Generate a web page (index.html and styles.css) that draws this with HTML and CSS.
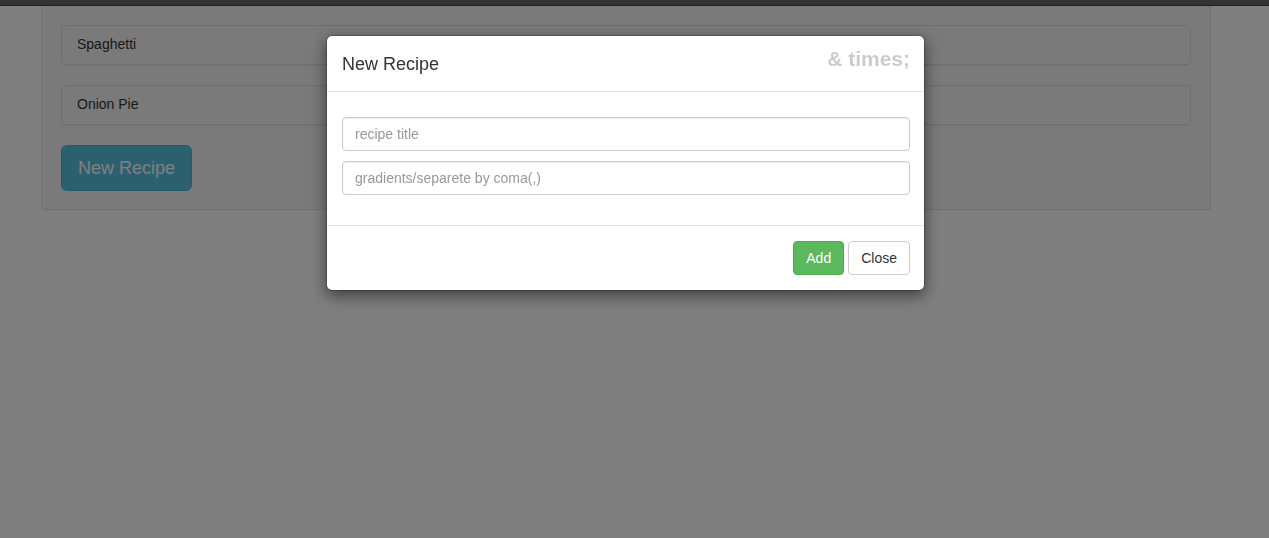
FILE: index.html
```html
<!DOCTYPE html>
<html>
<head>
<meta charset="utf-8">
<link rel="stylesheet" href="styles.css">
</head>
<body>
<div class="topbar"></div>
<div class="container">
  <div class="well">
    <div class="panel"><div class="panel-heading">Spaghetti</div></div>
    <div class="panel"><div class="panel-heading">Onion Pie</div></div>
    <button class="btn btn-info btn-lg">New Recipe</button>
  </div>
</div>
<div class="backdrop"></div>
<div class="modal">
  <div class="modal-content">
    <div class="modal-header">
      <h4 class="modal-title">New Recipe</h4>
      <button class="close">&amp; times;</button>
    </div>
    <div class="modal-body">
      <input class="form-control" type="text" placeholder="recipe title">
      <input class="form-control" type="text" placeholder="gradients/separete by coma(,)">
    </div>
    <div class="modal-footer">
      <button class="btn btn-success">Add</button>
      <button class="btn btn-default">Close</button>
    </div>
  </div>
</div>
</body>
</html>
```
FILE: styles.css
```css
* { box-sizing: border-box; }
html, body { margin: 0; padding: 0; }
body {
  background: #fff;
  font-family: "Liberation Sans", Arial, Helvetica, sans-serif;
  font-size: 14px;
  line-height: 1.42857;
  color: #333;
  height: 538px;
  overflow: hidden;
}
.topbar {
  height: 6px;
  background: #666;
  border-bottom: 1px solid #444;
}
.container {
  padding: 0 58px 0 41px;
}
.well {
  background: #f5f5f5;
  border: 1px solid #e3e3e3;
  border-top: 0;
  border-radius: 0 0 4px 4px;
  box-shadow: inset 0 1px 1px rgba(0,0,0,.05);
  padding: 19px 19px 18px 19px;
  width: 1170px;
}
.panel {
  background: #fff;
  border: 1px solid #ddd;
  border-radius: 4px;
  box-shadow: 0 1px 1px rgba(0,0,0,.05);
  margin-bottom: 20px;
}
.panel-heading {
  background: #f5f5f5;
  border-radius: 3px;
  padding: 8px 15px 10px;
  font-size: 14px;
  line-height: 20px;
  color: #333;
}
.btn {
  display: inline-block;
  font-family: inherit;
  font-size: 14px;
  line-height: 20px;
  padding: 6px 12px;
  border: 1px solid transparent;
  border-radius: 4px;
  cursor: pointer;
}
.btn-lg {
  font-size: 18px;
  line-height: 24px;
  padding: 10px 16px;
  border-radius: 6px;
}
.btn-info { background: #5bc0de; border-color: #46b8da; color: #fff; }
.btn-success { background: #5cb85c; border-color: #4cae4c; color: #fff; }
.btn-default { background: #fff; border-color: #ccc; color: #333; }
.backdrop {
  position: fixed;
  inset: 0;
  background: #000;
  opacity: .5;
}
.modal {
  position: absolute;
  left: 326px;
  top: 35px;
  width: 599px;
}
.modal-content {
  background: #fff;
  border: 1px solid rgba(0,0,0,.2);
  border-radius: 6px;
  box-shadow: 0 5px 15px rgba(0,0,0,.5);
  background-clip: padding-box;
}
.modal-header {
  display: flex;
  justify-content: space-between;
  align-items: flex-start;
  padding: 16px 14px 13px 15px;
  border-bottom: 1px solid #e5e5e5;
}
.modal-title {
  margin: 0;
  font-size: 18px;
  font-weight: 500;
  line-height: 1.42857;
  color: #333;
}
.close {
  background: none;
  border: 0;
  padding: 0;
  margin-top: -4px;
  font-family: inherit;
  font-size: 21px;
  font-weight: bold;
  line-height: 1;
  color: #000;
  opacity: .2;
}
.modal-body {
  padding: 25px 14px 30px 15px;
  display: flex;
  flex-direction: column;
  gap: 10px;
}
.form-control {
  display: block;
  width: 100%;
  height: 34px;
  padding: 6px 12px;
  font-family: inherit;
  font-size: 14px;
  line-height: 20px;
  color: #555;
  background: #fff;
  border: 1px solid #ccc;
  border-radius: 4px;
  box-shadow: inset 0 1px 1px rgba(0,0,0,.075);
}
.form-control::placeholder { color: #999; }
.modal-footer {
  display: flex;
  justify-content: flex-end;
  gap: 4px;
  padding: 15px 14px 15px;
  border-top: 1px solid #e5e5e5;
}
```
